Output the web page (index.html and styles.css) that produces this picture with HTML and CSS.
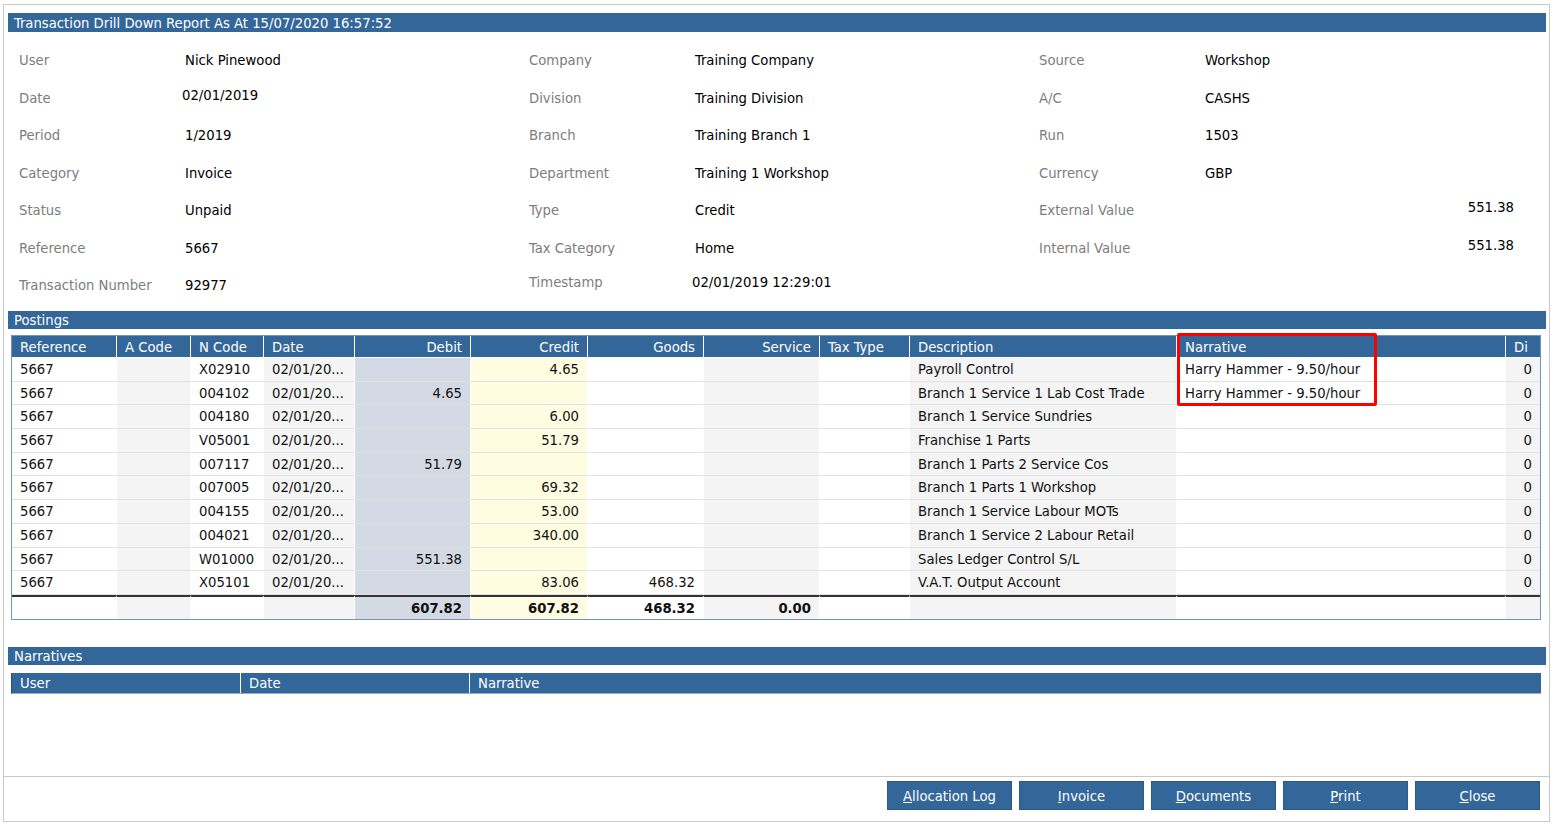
FILE: index.html
```html
<!DOCTYPE html>
<html lang="en">
<head>
    <meta charset="UTF-8">
    <title>Transaction Drill Down Report</title>
    <link rel="stylesheet" href="styles.css">
</head>
<body>
    <div class="dialog">
        <div class="main">
            <div class="bar title-bar">Transaction Drill Down Report As At 15/07/2020 16:57:52</div>

            <div class="info">
                <div class="lbl">User</div><div class="val">Nick Pinewood</div>
                <div class="lbl">Company</div><div class="val">Training Company</div>
                <div class="lbl">Source</div><div class="val">Workshop</div>

                <div class="lbl">Date</div><div class="val up left">02/01/2019</div>
                <div class="lbl">Division</div><div class="val">Training Division</div>
                <div class="lbl">A/C</div><div class="val">CASHS</div>

                <div class="lbl">Period</div><div class="val">1/2019</div>
                <div class="lbl">Branch</div><div class="val">Training Branch 1</div>
                <div class="lbl">Run</div><div class="val">1503</div>

                <div class="lbl">Category</div><div class="val">Invoice</div>
                <div class="lbl">Department</div><div class="val">Training 1 Workshop</div>
                <div class="lbl">Currency</div><div class="val">GBP</div>

                <div class="lbl">Status</div><div class="val">Unpaid</div>
                <div class="lbl">Type</div><div class="val">Credit</div>
                <div class="lbl">External Value</div><div class="val up num">551.38</div>

                <div class="lbl">Reference</div><div class="val">5667</div>
                <div class="lbl">Tax Category</div><div class="val">Home</div>
                <div class="lbl">Internal Value</div><div class="val up num">551.38</div>

                <div class="lbl">Transaction Number</div><div class="val">92977</div>
                <div class="lbl up">Timestamp</div><div class="val up left">02/01/2019 12:29:01</div>
                <div></div><div></div>
            </div>

            <div class="bar">Postings</div>

            <div class="postings">
                <div class="prow phead">
                    <div>Reference</div><div>A Code</div><div>N Code</div><div>Date</div>
                    <div class="r">Debit</div><div class="r">Credit</div><div class="r">Goods</div><div class="r">Service</div>
                    <div>Tax Type</div><div>Description</div><div>Narrative</div><div>Di</div>
                </div>
                <div class="prow">
                    <div>5667</div><div></div><div>X02910</div><div>02/01/20...</div>
                    <div class="r"></div><div class="r">4.65</div><div class="r"></div><div class="r"></div>
                    <div></div><div>Payroll Control</div><div>Harry Hammer - 9.50/hour</div><div class="r">0</div>
                </div>
                <div class="prow">
                    <div>5667</div><div></div><div>004102</div><div>02/01/20...</div>
                    <div class="r">4.65</div><div class="r"></div><div class="r"></div><div class="r"></div>
                    <div></div><div>Branch 1 Service 1 Lab Cost Trade</div><div>Harry Hammer - 9.50/hour</div><div class="r">0</div>
                </div>
                <div class="prow">
                    <div>5667</div><div></div><div>004180</div><div>02/01/20...</div>
                    <div class="r"></div><div class="r">6.00</div><div class="r"></div><div class="r"></div>
                    <div></div><div>Branch 1 Service Sundries</div><div></div><div class="r">0</div>
                </div>
                <div class="prow">
                    <div>5667</div><div></div><div>V05001</div><div>02/01/20...</div>
                    <div class="r"></div><div class="r">51.79</div><div class="r"></div><div class="r"></div>
                    <div></div><div>Franchise 1 Parts</div><div></div><div class="r">0</div>
                </div>
                <div class="prow">
                    <div>5667</div><div></div><div>007117</div><div>02/01/20...</div>
                    <div class="r">51.79</div><div class="r"></div><div class="r"></div><div class="r"></div>
                    <div></div><div>Branch 1 Parts 2 Service Cos</div><div></div><div class="r">0</div>
                </div>
                <div class="prow">
                    <div>5667</div><div></div><div>007005</div><div>02/01/20...</div>
                    <div class="r"></div><div class="r">69.32</div><div class="r"></div><div class="r"></div>
                    <div></div><div>Branch 1 Parts 1 Workshop</div><div></div><div class="r">0</div>
                </div>
                <div class="prow">
                    <div>5667</div><div></div><div>004155</div><div>02/01/20...</div>
                    <div class="r"></div><div class="r">53.00</div><div class="r"></div><div class="r"></div>
                    <div></div><div>Branch 1 Service Labour MOTs</div><div></div><div class="r">0</div>
                </div>
                <div class="prow">
                    <div>5667</div><div></div><div>004021</div><div>02/01/20...</div>
                    <div class="r"></div><div class="r">340.00</div><div class="r"></div><div class="r"></div>
                    <div></div><div>Branch 1 Service 2 Labour Retail</div><div></div><div class="r">0</div>
                </div>
                <div class="prow">
                    <div>5667</div><div></div><div>W01000</div><div>02/01/20...</div>
                    <div class="r">551.38</div><div class="r"></div><div class="r"></div><div class="r"></div>
                    <div></div><div>Sales Ledger Control S/L</div><div></div><div class="r">0</div>
                </div>
                <div class="prow">
                    <div>5667</div><div></div><div>X05101</div><div>02/01/20...</div>
                    <div class="r"></div><div class="r">83.06</div><div class="r">468.32</div><div class="r"></div>
                    <div></div><div>V.A.T. Output Account</div><div></div><div class="r">0</div>
                </div>
                <div class="prow ptotal">
                    <div></div><div></div><div></div><div></div>
                    <div class="r">607.82</div><div class="r">607.82</div><div class="r">468.32</div><div class="r">0.00</div>
                    <div></div><div></div><div></div><div></div>
                </div>
                <div class="highlight"></div>
            </div>

            <div class="bar narr-bar">Narratives</div>

            <div class="narratives">
                <div>User</div><div>Date</div><div>Narrative</div>
            </div>
        </div>

        <div class="footer">
            <button class="btn"><u>A</u>llocation Log</button>
            <button class="btn"><u>I</u>nvoice</button>
            <button class="btn"><u>D</u>ocuments</button>
            <button class="btn"><u>P</u>rint</button>
            <button class="btn"><u>C</u>lose</button>
        </div>
    </div>
</body>
</html>
```

FILE: styles.css
```css
body {
    margin: 0;
    background: #fff;
    font-family: "DejaVu Sans Condensed", "Liberation Sans", sans-serif;
    font-size: 14.7px;
    color: #111;
}
.dialog {
    box-sizing: border-box;
    margin: 4px 0 0 3px;
    width: 1547px;
    height: 818px;
    border: 1px solid #c9c9c9;
    display: flex;
    flex-direction: column;
}
.main {
    flex: 1;
    padding: 8px 3px 0 4px;
}
.bar {
    height: 18px;
    line-height: 18px;
    padding-left: 6px;
    background-color: #336699;
    color: #fff;
}
.title-bar {
    height: 19px;
    line-height: 19px;
}

/* header details */
.info {
    display: grid;
    grid-template-columns: 166px 344px 166px 344px 166px 344px;
    grid-auto-rows: 37.5px;
    align-items: center;
    margin: 9px 0 7.5px;
    padding-left: 11px;
}
.lbl {
    color: #7d7d7d;
}
.val {
    color: #000;
}
.up {
    margin-bottom: 6px;
}
.left {
    margin-left: -3px;
}
.num {
    text-align: right;
    padding-right: 35px;
}

/* postings grid */
.postings {
    position: relative;
    box-sizing: border-box;
    width: 1530px;
    margin: 6px 0 0 3px;
    border: 1px solid #7393bd;
}
.prow {
    display: grid;
    grid-template-columns: 105px 74px 73px 91px 116px 117px 116px 116px 90px 267px 329px 34px;
    height: 23.7px;
}
.prow > div {
    box-sizing: border-box;
    padding: 0 8px;
    line-height: 22px;
    border-right: 1px solid #fff;
    border-bottom: 1px solid #e1e1e1;
    white-space: nowrap;
    overflow: hidden;
}
.prow > div:last-child {
    border-right: none;
}
.prow > div:nth-child(2),
.prow > div:nth-child(4),
.prow > div:nth-child(8),
.prow > div:nth-child(10),
.prow > div:nth-child(12) {
    background: #f4f4f4;
}
.prow > div:nth-child(5) {
    background: #d3dae4;
}
.prow > div:nth-child(6) {
    background: #fffde1;
}
.prow .r {
    text-align: right;
}
.phead {
    height: 22px;
}
.phead > div,
.prow.phead > div:nth-child(n) {
    background: #336699;
    color: #fff;
    line-height: 21px;
    border-bottom: 1px solid #fff;
}
.ptotal {
    height: 24px;
}
.ptotal > div {
    border-top: 2px solid #333;
    border-bottom: none;
    font-weight: bold;
}
.highlight {
    position: absolute;
    left: 1165px;
    top: -3px;
    width: 200px;
    height: 73px;
    box-sizing: border-box;
    border: 3px solid #f00;
    border-radius: 2px;
}

.narr-bar {
    margin-top: 27px;
}
.narratives {
    display: grid;
    grid-template-columns: 229px 229px 1fr;
    box-sizing: border-box;
    width: 1530px;
    margin: 8px 0 0 3px;
    border-left: 1px solid #26507e;
    border-bottom: 1px solid #8eaed4;
    background: #336699;
    color: #fff;
}
.narratives > div {
    height: 20px;
    line-height: 20px;
    padding-left: 8px;
    border-right: 1px solid #fff;
}
.narratives > div:last-child {
    border-right: none;
}

/* buttons */
.footer {
    box-sizing: border-box;
    height: 45px;
    border-top: 1px solid #c9c9c9;
    display: flex;
    justify-content: flex-end;
    align-items: flex-start;
    gap: 7px;
    padding: 4px 9px 0 0;
}
.btn {
    width: 125px;
    height: 29px;
    border: 1px solid #2b5a8a;
    background-color: #336699;
    color: #fff;
    font-family: inherit;
    font-size: 14.7px;
    cursor: pointer;
}
.btn u {
    text-decoration-thickness: 1px;
}
```
